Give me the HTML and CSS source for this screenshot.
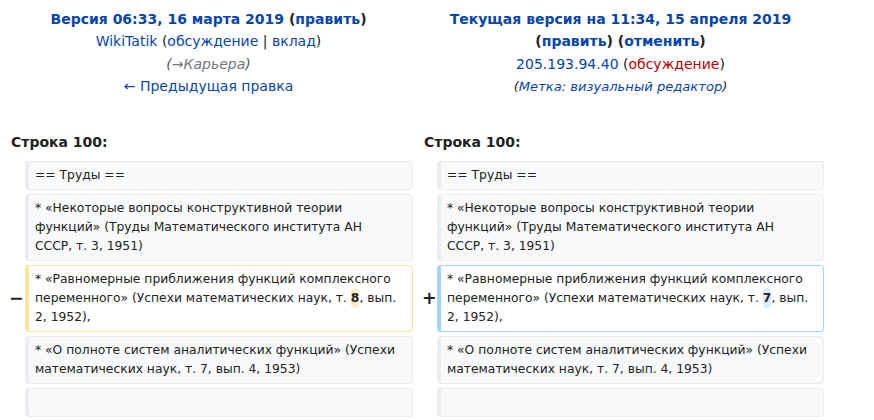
FILE: index.html
```html
<!DOCTYPE html>
<html lang="ru">
<head>
<meta charset="utf-8">
<title>Разница между версиями</title>
<link rel="stylesheet" href="styles.css">
</head>
<body>
<div class="diff">
  <div class="title">
    <div><strong><a href="#">Версия 06:33, 16 марта 2019</a> <span class="paren">(<a href="#">править</a>)</span></strong></div>
    <div><a href="#">WikiTatik</a> <span class="paren">(<a href="#">обсуждение</a> | <a href="#">вклад</a>)</span></div>
    <div class="comment">(<span class="autocomment">→Карьера</span>)</div>
    <div><a href="#">← Предыдущая правка</a></div>
  </div>
  <div class="title">
    <div><strong><a href="#">Текущая версия на 11:34, 15 апреля 2019</a></strong></div>
    <div><strong class="paren">(<a href="#">править</a>) (<a href="#">отменить</a>)</strong></div>
    <div><a href="#">205.193.94.40</a> <span class="paren">(<a href="#" class="new">обсуждение</a>)</span></div>
    <div><span class="tags">(<a href="#">Метка</a><a href="#">: визуальный редактор</a>)</span></div>
  </div>

  <div class="lineno">Строка 100:</div>
  <div class="lineno">Строка 100:</div>

  <div class="marker"></div>
  <div class="line context">== Труды ==</div>
  <div class="marker"></div>
  <div class="line context">== Труды ==</div>

  <div class="marker"></div>
  <div class="line context">* «Некоторые вопросы конструктивной теории функций» (Труды Математического института АН<br>СССР, т. 3, 1951)</div>
  <div class="marker"></div>
  <div class="line context">* «Некоторые вопросы конструктивной теории функций» (Труды Математического института АН<br>СССР, т. 3, 1951)</div>

  <div class="marker">−</div>
  <div class="line deleted">* «Равномерные приближения функций комплексного переменного» (Успехи математических наук, т. <del class="change">8</del>, вып. 2, 1952),</div>
  <div class="marker">+</div>
  <div class="line added">* «Равномерные приближения функций комплексного переменного» (Успехи математических наук, т. <ins class="change">7</ins>, вып. 2, 1952),</div>

  <div class="marker"></div>
  <div class="line context">* «О полноте систем аналитических функций» (Успехи математических наук, т. 7, вып. 4, 1953)</div>
  <div class="marker"></div>
  <div class="line context">* «О полноте систем аналитических функций» (Успехи математических наук, т. 7, вып. 4, 1953)</div>

  <div class="marker"></div>
  <div class="line context"></div>
  <div class="marker"></div>
  <div class="line context"></div>
</div>
</body>
</html>
```

FILE: styles.css
```css
html, body {
  margin: 0;
  padding: 0;
  background: #ffffff;
}

body {
  font-family: "DejaVu Sans", sans-serif;
  font-size: 14px;
  line-height: 1.6;
  color: #222222;
}

a {
  color: #0645ad;
  text-decoration: none;
}

a.new {
  color: #ba0000;
}

.diff {
  display: grid;
  grid-template-columns: 17px 388px 16px 387px;
  gap: 4px;
  padding: 4px;
  width: max-content;
}

.title {
  grid-column: span 2;
  text-align: center;
  padding: 4px 7px;
  line-height: 22.4px;
}

.paren {
  color: #222222;
}

.comment {
  font-style: italic;
  color: #54595d;
}

.autocomment {
  color: #72777d;
}

.tags {
  font-style: italic;
  font-size: 13.1px;
  color: #222222;
}

.lineno {
  grid-column: span 2;
  margin-top: 20px;
  padding: 4px 7px;
  font-weight: bold;
  line-height: 22px;
}

.marker {
  align-self: center;
  font-weight: bold;
  font-size: 17.5px;
  line-height: 1.2;
  padding-left: 5px;
  white-space: nowrap;
}

.line {
  font-size: 12.32px;
  line-height: 19px;
  height: auto;
  padding: 4px 6px;
  border: 1px solid #eaecf0;
  border-left-width: 4px;
  border-radius: 4px;
  overflow-wrap: break-word;
  min-height: 19px;
}

.context {
  background: #f8f9fa;
  color: #222222;
}

.deleted {
  background: #ffffff;
  border-color: #ffe49c;
}

.added {
  background: #ffffff;
  border-color: #a3d3ff;
}

.change {
  font-weight: bold;
  text-decoration: none;
  padding: 3px 0;
  border-radius: 4px;
}

.deleted .change {
  background: #feeec8;
}

.added .change {
  background: #d8ecff;
}
```
